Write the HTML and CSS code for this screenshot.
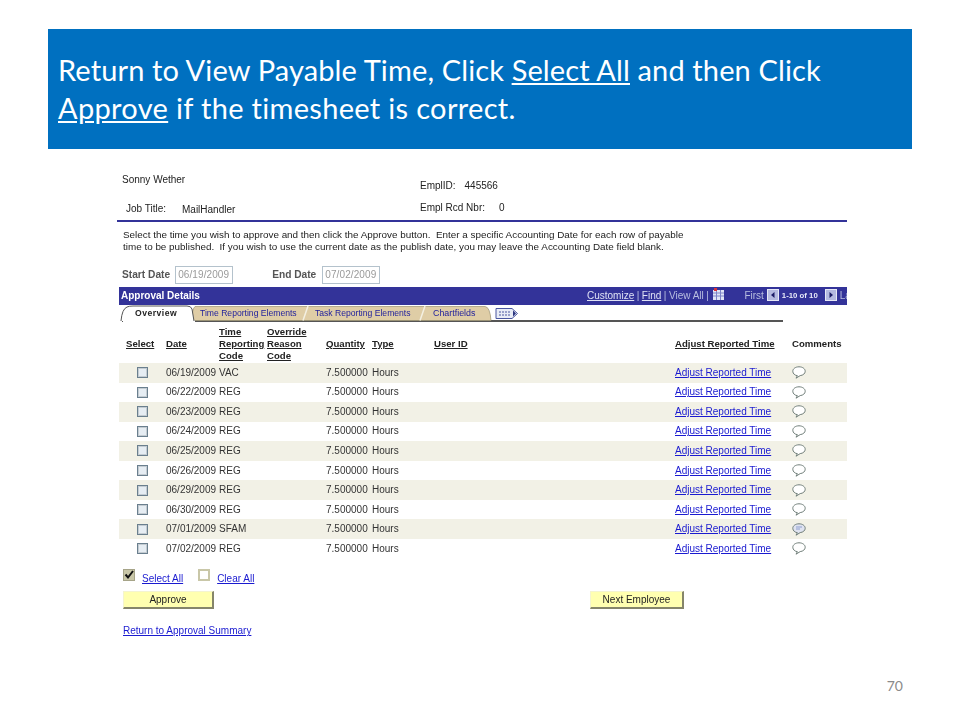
FILE: index.html
```html
<!DOCTYPE html>
<html lang="en">
<head>
<meta charset="utf-8">
<title>Approve Payable Time</title>
<link rel="stylesheet" href="styles.css">
</head>
<body>
<svg class="defs" width="0" height="0" aria-hidden="true">
  <symbol id="bubble" viewBox="0 0 14 13">
    <path d="M7 .8C3.4.8.8 2.8.8 5.3c0 2.4 2.2 4.1 4.6 4.4L4 12.2l4.2-2.6c2.9-.3 5-2.1 5-4.3C13.2 2.8 10.6.8 7 .8z" fill="#fff" stroke="#6f7d78" stroke-width="1"/>
  </symbol>
  <symbol id="bubble-full" viewBox="0 0 14 13">
    <path d="M7 .8C3.4.8.8 2.8.8 5.3c0 2.4 2.2 4.1 4.6 4.4L4 12.2l4.2-2.600c2.900-.3 5-2.100 5-4.300C13.200 2.800 10.600.8 7 .8z" fill="#dfe3f0" stroke="#6f7d78" stroke-width="1"/>
    <path d="M4 4h6M4 6h4" stroke="#8f9fd0" stroke-width="1"/>
  </symbol>
</svg>
<main class="slide">
  <header class="banner">
    <h1><span class="line-one">Return to View Payable Time, Click <u>Select All</u> and then Click</span> <span class="line-two"><u>Approve</u> if the timesheet is correct.</span></h1>
  </header>
  <section class="doc">
    <div class="who">
      <div class="who-name">Sonny Wether</div>
      <div class="who-id"><span class="who-id-label">EmplID:</span><span>445566</span></div>
      <div class="who-job"><span class="who-job-label">Job Title:</span><span class="who-job-val">MailHandler</span></div>
      <div class="who-rcd"><span class="who-rcd-label">Empl Rcd Nbr:</span><span>0</span></div>
    </div>
    <p class="intro">Select the time you wish to approve and then click the Approve button.&nbsp; Enter a specific Accounting Date for each row of payable<br>time to be published.&nbsp; If you wish to use the current date as the publish date, you may leave the Accounting Date field blank.</p>
    <div class="dates">
      <span class="date-label">Start Date</span><span class="date-box">06/19/2009</span>
      <span class="date-label date-end">End Date</span><span class="date-box">07/02/2009</span>
    </div>
    <div class="bar">
      <strong class="bar-title">Approval Details</strong>
      <div class="bar-nav">
        <a>Customize</a><span class="sep">|</span><a>Find</a><span class="sep">|</span><span>View All</span><span class="sep">|</span>
        <svg class="grid-ic" width="12" height="13" viewBox="0 0 12 13"><rect y="2" width="11" height="10" fill="#dfe4f6"/><path d="M0 5h11M0 8h11M3.500 2v10M7.500 2v10" stroke="#7c84c8"/><rect x="1" width="3" height="3" fill="#d8303a"/></svg>
        <span class="first">First</span>
        <svg class="nav-ic" width="12" height="12" viewBox="0 0 12 12"><rect x=".5" y=".5" width="11" height="11" fill="#b4b9e0" stroke="#e6e8f6"/><path d="M7.500 3v6L4 6z" fill="#1c1c66"/></svg>
        <b class="count">1-10 of 10</b>
        <svg class="nav-ic nav-next" width="12" height="12" viewBox="0 0 12 12"><rect x=".5" y=".5" width="11" height="11" fill="#b4b9e0" stroke="#e6e8f6"/><path d="M4.500 3v6L8 6z" fill="#1c1c66"/></svg>
        <span>Last</span>
      </div>
    </div>
    <div class="tabs">
      <svg class="tab-art" width="400" height="18" viewBox="0 0 400 18">
        <path d="M73 15.500Q73 4 76 1.500H366Q371 2 372 15.500Z" fill="#dfcda6" stroke="#9b9270" stroke-width=".7"/>
        <path d="M184 15.500 189 1M301 15.500 306 1" fill="none" stroke="#f4f0e2" stroke-width="1.500"/>
        <path d="M0 16h3M4 16.500H76" stroke="#fff" stroke-width="2.500"/>
        <path d="M2 16Q3 4 8 2Q10 1 14 1H68Q72 1 73 4L75 16" fill="#fff" stroke="#555" stroke-width="1"/>
      </svg>
      <span class="tab tab-on">Overview</span>
      <span class="tab tab-time">Time Reporting Elements</span>
      <span class="tab tab-task">Task Reporting Elements</span>
      <span class="tab tab-chart">Chartfields</span>
      <svg class="tab-more" width="24" height="13" viewBox="0 0 24 13"><path d="M1 1.500H17L22.500 6.500 17 11.500H1z" fill="#e8ecf6" stroke="#4a56a0"/><path d="M4 5h11M4 8h11" stroke="#4a56a0" stroke-dasharray="2 1"/><path d="M18 3.500l3 3-3 3z" fill="#2a347f"/></svg>
    </div>
    <table class="grid">
      <colgroup><col class="c1"><col class="c2"><col class="c3"><col class="c4"><col class="c5"><col class="c6"><col class="c7"><col class="c8"><col class="c9"></colgroup>
      <thead>
        <tr>
          <th><u>Select</u></th><th><u>Date</u></th><th><u>Time<br>Reporting<br>Code</u></th><th><u>Override<br>Reason<br>Code</u></th><th><u>Quantity</u></th><th><u>Type</u></th><th><u>User ID</u></th><th><u>Adjust Reported Time</u></th><th class="nou">Comments</th>
        </tr>
      </thead>
      <tbody>
        <tr><td class="ck"><span class="box"></span></td><td>06/19/2009</td><td>VAC</td><td></td><td>7.500000</td><td>Hours</td><td></td><td><a>Adjust Reported Time</a></td><td class="bub"><svg width="14" height="13"><use href="#bubble"/></svg></td></tr>
        <tr><td class="ck"><span class="box"></span></td><td>06/22/2009</td><td>REG</td><td></td><td>7.500000</td><td>Hours</td><td></td><td><a>Adjust Reported Time</a></td><td class="bub"><svg width="14" height="13"><use href="#bubble"/></svg></td></tr>
        <tr><td class="ck"><span class="box"></span></td><td>06/23/2009</td><td>REG</td><td></td><td>7.500000</td><td>Hours</td><td></td><td><a>Adjust Reported Time</a></td><td class="bub"><svg width="14" height="13"><use href="#bubble"/></svg></td></tr>
        <tr><td class="ck"><span class="box"></span></td><td>06/24/2009</td><td>REG</td><td></td><td>7.500000</td><td>Hours</td><td></td><td><a>Adjust Reported Time</a></td><td class="bub"><svg width="14" height="13"><use href="#bubble"/></svg></td></tr>
        <tr><td class="ck"><span class="box"></span></td><td>06/25/2009</td><td>REG</td><td></td><td>7.500000</td><td>Hours</td><td></td><td><a>Adjust Reported Time</a></td><td class="bub"><svg width="14" height="13"><use href="#bubble"/></svg></td></tr>
        <tr><td class="ck"><span class="box"></span></td><td>06/26/2009</td><td>REG</td><td></td><td>7.500000</td><td>Hours</td><td></td><td><a>Adjust Reported Time</a></td><td class="bub"><svg width="14" height="13"><use href="#bubble"/></svg></td></tr>
        <tr><td class="ck"><span class="box"></span></td><td>06/29/2009</td><td>REG</td><td></td><td>7.500000</td><td>Hours</td><td></td><td><a>Adjust Reported Time</a></td><td class="bub"><svg width="14" height="13"><use href="#bubble"/></svg></td></tr>
        <tr><td class="ck"><span class="box"></span></td><td>06/30/2009</td><td>REG</td><td></td><td>7.500000</td><td>Hours</td><td></td><td><a>Adjust Reported Time</a></td><td class="bub"><svg width="14" height="13"><use href="#bubble"/></svg></td></tr>
        <tr><td class="ck"><span class="box"></span></td><td>07/01/2009</td><td>SFAM</td><td></td><td>7.500000</td><td>Hours</td><td></td><td><a>Adjust Reported Time</a></td><td class="bub"><svg width="14" height="13"><use href="#bubble-full"/></svg></td></tr>
        <tr><td class="ck"><span class="box"></span></td><td>07/02/2009</td><td>REG</td><td></td><td>7.500000</td><td>Hours</td><td></td><td><a>Adjust Reported Time</a></td><td class="bub"><svg width="14" height="13"><use href="#bubble"/></svg></td></tr>
      </tbody>
    </table>
    <div class="picks">
      <span class="tick"><svg width="12" height="12" viewBox="0 0 12 12"><path d="M2.500 5.500 5 8.500 10 2" fill="none" stroke="#111" stroke-width="2"/></svg></span>
      <a class="pick-sel">Select All</a>
      <span class="tick tick-off"></span>
      <a class="pick-clr">Clear All</a>
    </div>
    <div class="actions">
      <span class="btn">Approve</span>
      <span class="btn btn-next">Next Employee</span>
    </div>
    <a class="back">Return to Approval Summary</a>
  </section>
  <footer class="pageno">70</footer>
</main>
</body>
</html>
```
FILE: styles.css
```css
* { box-sizing: border-box; }
html, body { margin: 0; padding: 0; background: #fff; }
.defs { position: absolute; }
.slide { width: 960px; height: 720px; padding-top: 29px; overflow: hidden; display: flex; flex-direction: column; font-family: "Lato", "Liberation Sans", sans-serif; }
.banner { margin: 0 48px; height: 120px; background: #0070c0; padding: 22px 10px 0; flex: none; }
.banner h1 { margin: 0; font-size: 29px; line-height: 38px; font-weight: 400; color: #fff; }
.line-one, .line-two { display: block; white-space: nowrap; }
.line-one { letter-spacing: .13px; }
.line-two { letter-spacing: .32px; }
.doc { width: 730px; margin: 23px 0 0 117px; flex: none; font: 10px/12px "Liberation Sans", Arial, sans-serif; color: #222; filter: blur(.3px); }
.who { display: grid; grid-template-columns: 303px 1fr; height: 48px; }
.who-name { padding: 2px 0 0 5px; }
.who-id { padding: 8px 0 0 0; display: flex; gap: 9px; }
.who-job { padding: 7px 0 0 9px; display: flex; }
.who-job-label { width: 56px; }
.who-job-val { padding-top: 1px; }
.who-rcd { padding: 6px 0 0 0; display: flex; gap: 14px; }
.intro { margin: 0; padding: 7px 0 0 6px; height: 43px; border-top: 2px solid #333399; line-height: 12px; font-size: 9.900px; }
.dates { display: flex; align-items: center; padding-left: 5px; height: 24px; font-weight: 700; color: #555; font-size: 10.200px; }
.date-label { margin-right: 5px; }
.date-end { margin-left: 39px; margin-right: 6px; }
.date-box { width: 58px; height: 18px; border: 1px solid #b4c2cc; color: #9a9a9a; font-weight: 400; font-size: 10px; line-height: 15px; padding-left: 2px; letter-spacing: .1px; }
.bar { margin: 0 0 0 2px; height: 18px; background: #333399; color: #fff; display: flex; justify-content: space-between; align-items: center; padding-left: 2px; overflow: hidden; white-space: nowrap; }
.bar-title { font-size: 10px; }
.bar-nav { display: flex; align-items: center; width: 260px; flex: none; color: #b9bfe0; font-size: 10px; }
.bar-nav a { color: #dfe2f5; text-decoration: underline; }
.sep { margin: 0 2.500px; }
.grid-ic { margin: 0 0 3px 2px; flex: none; }
.first { margin-left: 19px; margin-right: 3px; }
.count { font-size: 7.800px; margin: 0 7px 0 3px; color: #e8eaf8; }
.nav-ic { margin-bottom: 2px; flex: none; }
.nav-next { margin-right: 3px; }
.tabs { position: relative; margin-left: 2px; width: 664px; height: 17px; padding-top: 1px; border-bottom: 2px solid #555; display: flex; align-items: center; font-size: 8.600px; color: #1d1d9c; }
.tab-art { position: absolute; left: 0; top: 0; overflow: visible; }
.tab { position: relative; }
.tab-on { margin-left: 16px; width: 65px; font-weight: 700; color: #222; letter-spacing: .5px; }
.tab-time { width: 115px; }
.tab-task { width: 118px; }
.tab-chart { width: 62px; font-size: 8.900px; }
.tab-more { position: relative; flex: none; }
.grid { margin: 2px 0 0 2px; width: 728px; border-collapse: collapse; table-layout: fixed; }
.c1 { width: 47px; } .c2 { width: 53px; } .c3 { width: 48px; } .c4 { width: 59px; } .c5 { width: 46px; } .c6 { width: 62px; } .c7 { width: 241px; } .c8 { width: 117px; } .c9 { width: 55px; }
.grid th { padding: 0; height: 39px; vertical-align: middle; text-align: left; font-weight: 700; line-height: 12px; color: #222; font-size: 9.600px; }
.grid th:first-child { padding-left: 7px; }
.grid th u { text-underline-offset: 1px; }
.grid td { height: 19.550px; padding: 0; color: #333; white-space: nowrap; }
.grid tbody tr:nth-child(odd) td { background: #f2f1e6; }
.grid a { color: #1a1ad0; text-decoration: underline; }
.ck { padding-left: 18px !important; }
.box { display: block; width: 11px; height: 11px; background: #e6edf3; border: 1px solid #6a7f8e; box-shadow: inset 0 0 0 1px #c4ccd2; }
.bub svg { display: block; }
.picks { display: flex; align-items: center; height: 19px; margin: 9px 0 0 6px; }
.picks a { color: #1a1ad0; text-decoration: underline; padding-top: 4px; }
.tick { width: 12px; height: 12px; background: #c9c7a8; border: 1px solid #a6a488; margin-bottom: 4px; display: block; }
.tick svg { display: block; margin: -1px; }
.tick-off { background: #fff; border: 2px solid #c9c7a8; }
.pick-sel { margin-left: 7px; margin-right: 15px; }
.pick-clr { margin-left: 7px; }
.actions { display: flex; margin: 5px 0 0 6px; width: 561px; justify-content: space-between; }
.btn { width: 91px; height: 18px; background: #ffffb0; border-style: solid; border-width: 1px 2px 2px 1px; border-color: #f4f4d0 #85856a #85856a #f4f4d0; text-align: center; line-height: 15px; color: #222; }
.btn-next { width: 94px; }
.back { display: block; margin: 16px 0 0 6px; color: #1a1ad0; text-decoration: underline; }
.pageno { margin: auto 57px 26px 0; text-align: right; font-size: 14px; color: #8a8a8a; line-height: 16px; }
```
